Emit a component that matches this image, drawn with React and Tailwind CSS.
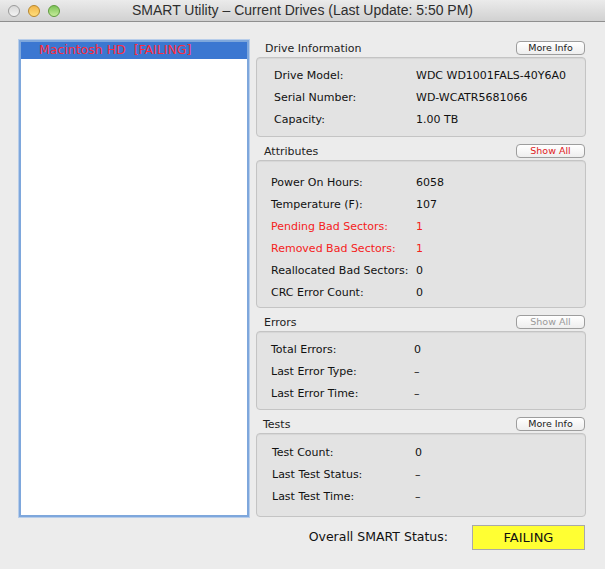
const FONT = { fontFamily: '"DejaVu Sans", "Liberation Sans", sans-serif' };

function MacButton({ text, tone = "normal" }) {
  const color =
    tone === "red" ? "text-[#e0201c]" : tone === "disabled" ? "text-[#9a9a9a]" : "text-[#1a1a1a]";
  return (
    <div
      className={`w-[69px] h-[14px] rounded-[4px] border border-[#9d9d9d] bg-gradient-to-b from-white to-[#eeeeee] flex items-center justify-center text-[9.5px] leading-none ${color}`}
    >
      {text}
    </div>
  );
}

function Row({ label, value, red, labelW }) {
  return (
    <div className={`h-[22px] flex items-center text-[11px] ${red ? "text-[#f5221c]" : "text-[#111]"}`}>
      <div style={{ width: labelW }} className="shrink-0">{label}</div>
      <div>{value}</div>
    </div>
  );
}

function Section({ title, button, tone, rows, boxClass, labelX, labelW, titleX }) {
  return (
    <div className="flex flex-col">
      <div className="h-[16px] flex items-start justify-between pr-[1px]">
        <div className={`text-[11px] text-[#222] leading-none mt-[2px] ${titleX}`}>{title}</div>
        <MacButton text={button} tone={tone} />
      </div>
      <div className={`rounded-[4px] border border-[#c4c4c4] bg-[#e3e3e3] shadow-[inset_0_1px_1px_rgba(0,0,0,0.06)] ${boxClass} ${labelX}`}>
        {rows.map((r) => (
          <Row key={r[0]} label={r[0]} value={r[1]} red={r[2]} labelW={labelW} />
        ))}
      </div>
    </div>
  );
}

export default function App() {
  return (
    <div className="w-[605px] h-[569px] bg-[#ececec] overflow-hidden" style={FONT}>
      {/* title bar */}
      <div className="h-[22px] bg-gradient-to-b from-[#ebebeb] to-[#d1d1d1] border-b border-[#8f8f8f] flex items-center relative">
        <div className="flex items-center gap-[8px] pl-[8px]">
          <div className="w-[12px] h-[12px] rounded-full border border-[#9a9a9a] bg-gradient-to-b from-[#d8d8d8] to-[#f4f4f4]" />
          <div className="w-[12px] h-[12px] rounded-full border border-[#b8862a] bg-gradient-to-b from-[#f2b64a] to-[#ffde7a]" />
          <div className="w-[12px] h-[12px] rounded-full border border-[#5e9a3c] bg-gradient-to-b from-[#7cc357] to-[#c6ec9a]" />
        </div>
        <div
          className="absolute inset-0 flex items-center justify-center text-[14px] text-[#2e2e2e]"
          style={{ fontFamily: '"Liberation Sans", Arial, sans-serif' }}
        >
          SMART Utility – Current Drives (Last Update: 5:50 PM)
        </div>
      </div>

      <div className="flex pl-[19px] pt-[18px]">
        {/* drive list */}
        <div className="w-[230px] h-[477px] border-2 border-[#7ea7dc] shadow-[0_0_0_1px_#b7cdea] bg-white shrink-0">
          <div className="h-[17px] bg-[#3b77d1] flex items-center pl-[18px] text-[12.5px] text-[#ff2c3c]">
            Macintosh HD&nbsp;&nbsp;[FAILING]
          </div>
        </div>

        {/* right column */}
        <div className="w-[330px] ml-[7px] pt-[1px] flex flex-col">
          <Section
            title="Drive Information"
            button="More Info"
            titleX="ml-[9px]"
            labelX="pl-[17px]"
            labelW={142}
            boxClass="h-[80px] pt-[7px]"
            rows={[
              ["Drive Model:", "WDC WD1001FALS-40Y6A0"],
              ["Serial Number:", "WD-WCATR5681066"],
              ["Capacity:", "1.00 TB"],
            ]}
          />
          <div className="h-[7px]" />
          <Section
            title="Attributes"
            button="Show All"
            tone="red"
            titleX="ml-[8px]"
            labelX="pl-[14px]"
            labelW={145}
            boxClass="h-[148px] pt-[11px]"
            rows={[
              ["Power On Hours:", "6058"],
              ["Temperature (F):", "107"],
              ["Pending Bad Sectors:", "1", true],
              ["Removed Bad Sectors:", "1", true],
              ["Reallocated Bad Sectors:", "0"],
              ["CRC Error Count:", "0"],
            ]}
          />
          <div className="h-[7px]" />
          <Section
            title="Errors"
            button="Show All"
            tone="disabled"
            titleX="ml-[8px]"
            labelX="pl-[14px]"
            labelW={143}
            boxClass="h-[79px] pt-[7px]"
            rows={[
              ["Total Errors:", "0"],
              ["Last Error Type:", "–"],
              ["Last Error Time:", "–"],
            ]}
          />
          <div className="h-[7px]" />
          <Section
            title="Tests"
            button="More Info"
            titleX="ml-[7px]"
            labelX="pl-[15px]"
            labelW={143}
            boxClass="h-[84px] pt-[8px]"
            rows={[
              ["Test Count:", "0"],
              ["Last Test Status:", "–"],
              ["Last Test Time:", "–"],
            ]}
          />

          <div className="flex items-center mt-[8px]">
            <div className="w-[216px] text-right pr-[24px] text-[12.5px] text-[#111]">Overall SMART Status:</div>
            <div className="w-[113px] h-[25px] border border-[#a9a9a9] bg-[#ffff33] flex items-center justify-center text-[13px] text-[#111]">
              FAILING
            </div>
          </div>
        </div>
      </div>
    </div>
  );
}
